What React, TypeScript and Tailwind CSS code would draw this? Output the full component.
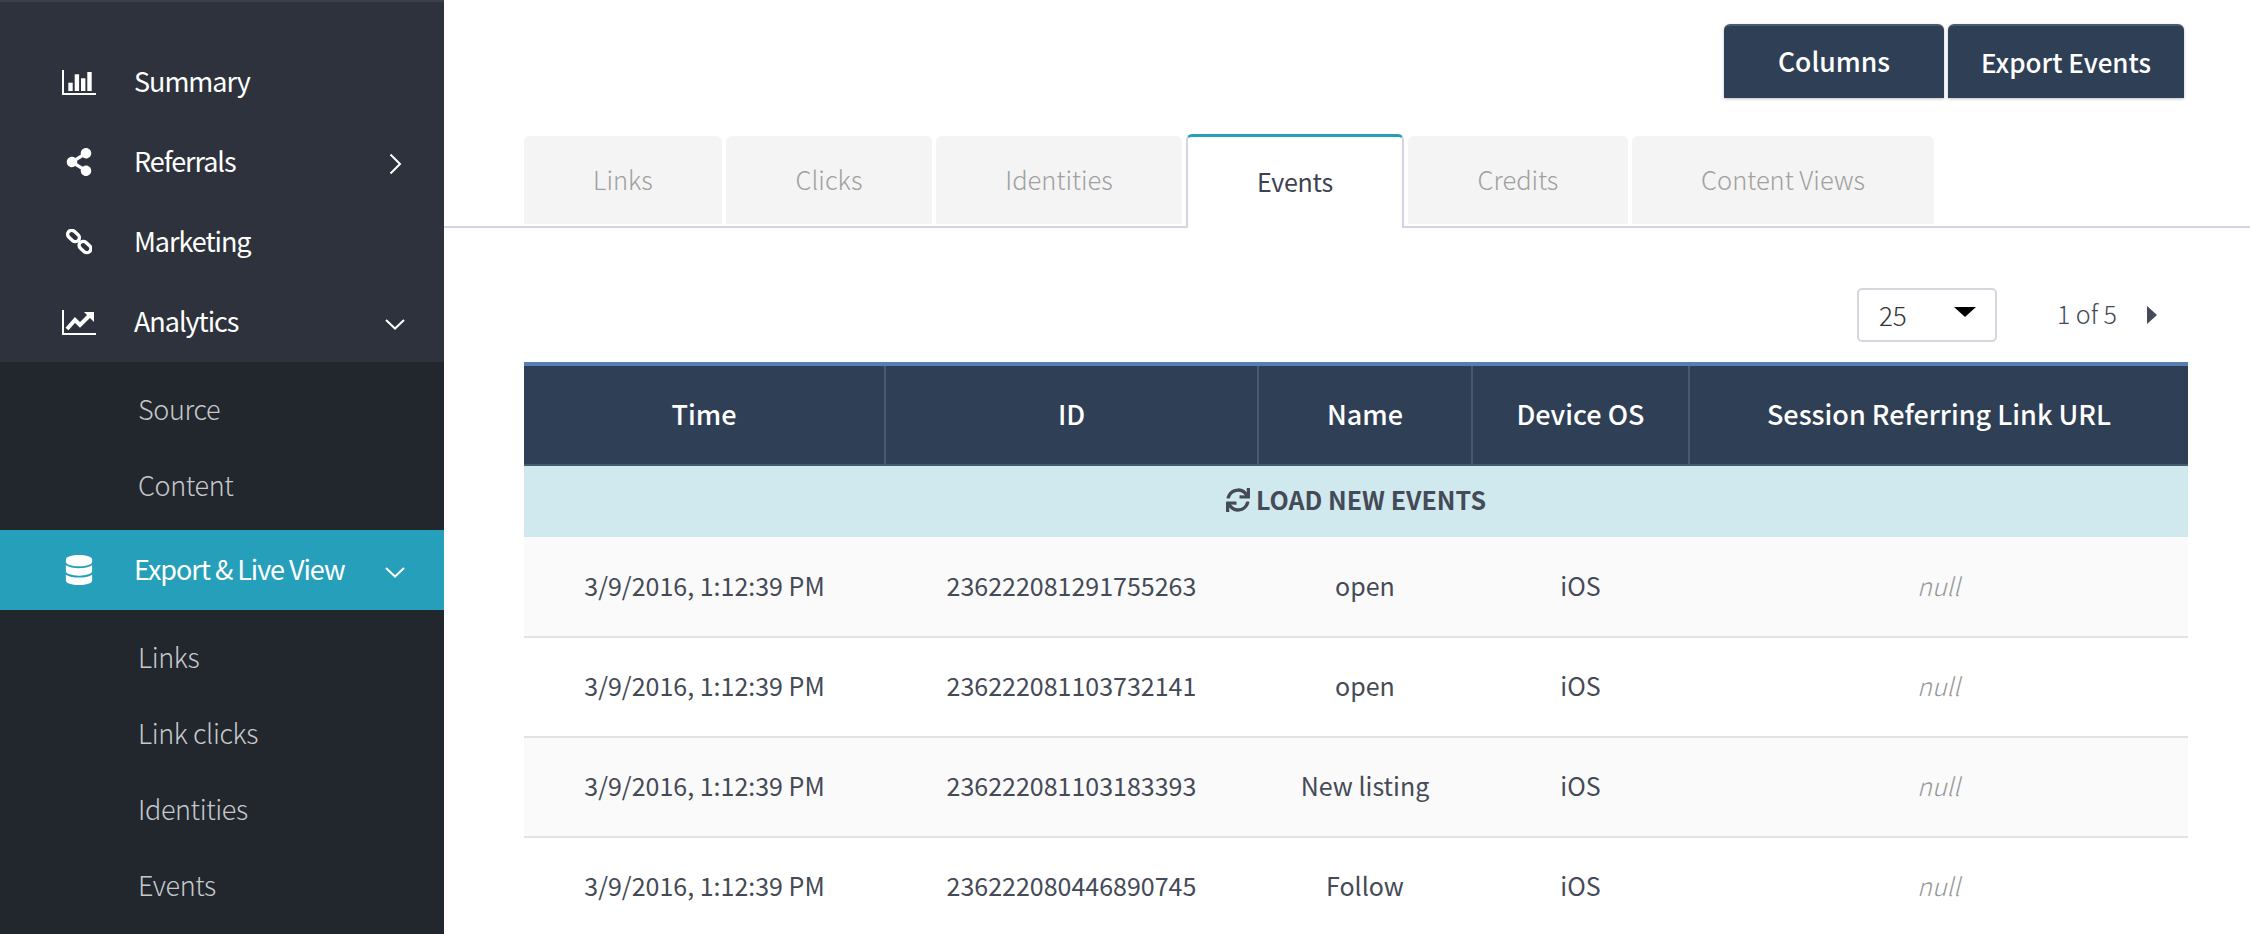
import { ReactNode } from "react";
import { FaShareAlt, FaDatabase, FaSync } from "react-icons/fa";

const BarIcon = () => (
  <svg width="34" height="25" viewBox="0 0 34 25" fill="#fff">
    <rect x="0" y="0" width="2" height="25" />
    <rect x="0" y="23" width="34" height="2" />
    <rect x="6.300" y="12.700" width="4.400" height="8.300" />
    <rect x="12.700" y="4.300" width="4.400" height="16.700" />
    <rect x="19" y="8.300" width="4.400" height="12.700" />
    <rect x="25.300" y="2" width="4.400" height="19" />
  </svg>
);
const LineIcon = () => (
  <svg width="34" height="25" viewBox="0 0 34 25" fill="none">
    <path d="M1 0v24H34" stroke="#fff" strokeWidth="2" />
    <path d="M5 19l8-9 5 5 10-10" stroke="#fff" strokeWidth="4" />
    <path d="M22 2h10v10z" fill="#fff" />
  </svg>
);
const LinkIcon = () => (
  <svg width="26" height="26" viewBox="0 0 26 26" fill="none" stroke="#fff" strokeWidth="3.400">
    <rect x="1" y="3" width="13" height="8" rx="4" transform="rotate(42 7.500 7)" />
    <rect x="12.500" y="14" width="13" height="8" rx="4" transform="rotate(42 19 18)" />
  </svg>
);
const Chevron = ({ dir }: { dir: "right" | "down" }) => (
  <svg width="20" height="20" viewBox="0 0 20 20" fill="none" stroke="#fff" strokeWidth="2">
    {dir === "right" ? <path d="M5.500 0.500L15 10l-9.500 9.500" /> : <path d="M1 6l9 8.500L19 6" />}
  </svg>
);

function NavItem({ icon, label, chevron, active }: { icon: ReactNode; label: string; chevron?: "right" | "down"; active?: boolean }) {
  return (
    <div className={`flex h-[80px] items-center text-[27px] text-white ${active ? "bg-[#269fba]" : ""}`}>
      <div className="mr-[5px] ml-[29px] flex w-[100px] shrink-0 justify-center">{icon}</div>
      <span className="flex-1 -translate-y-[1px] tracking-[-1.050px]">{label}</span>
      {chevron && (
        <div className="mr-[39px] flex w-[20px] justify-center pt-[3px]">
          <Chevron dir={chevron} />
        </div>
      )}
    </div>
  );
}

const SubItem = ({ label }: { label: string }) => (
  <div className="flex h-[76px] items-center pl-[138px] text-[27px] font-light tracking-[-0.4px] text-[#c6c8cb]">
    <span className="-translate-y-[1px]">{label}</span>
  </div>
);

const tabs = [
  { label: "Links", w: "w-[198px]" },
  { label: "Clicks", w: "w-[206px]" },
  { label: "Identities", w: "w-[246px]" },
  { label: "Events", w: "w-[218px]", active: true },
  { label: "Credits", w: "w-[220px]" },
  { label: "Content Views", w: "w-[302px]" },
];

const rows = [
  ["3/9/2016, 1:12:39 PM", "236222081291755263", "open", "iOS"],
  ["3/9/2016, 1:12:39 PM", "236222081103732141", "open", "iOS"],
  ["3/9/2016, 1:12:39 PM", "236222081103183393", "New listing", "iOS"],
  ["3/9/2016, 1:12:39 PM", "236222080446890745", "Follow", "iOS"],
];

export default function App() {
  return (
    <div className="flex h-[934px] w-[2250px] overflow-hidden bg-white font-['Noto_Sans_CJK_SC','Liberation_Sans',sans-serif]">
      <aside className="w-[444px] shrink-0 bg-[#22262d]">
        <div className="h-[362px] border-t-2 border-[#3b404a] bg-[#2d323c] pt-[40px]">
          <NavItem icon={<BarIcon />} label="Summary" />
          <NavItem icon={<FaShareAlt size={28} color="#fff" />} label="Referrals" chevron="right" />
          <NavItem icon={<LinkIcon />} label="Marketing" />
          <NavItem icon={<LineIcon />} label="Analytics" chevron="down" />
        </div>
        <div className="pt-[10px] pb-[6px]">
          <SubItem label="Source" />
          <SubItem label="Content" />
        </div>
        <NavItem icon={<FaDatabase size={30} color="#fff" />} label="Export & Live View" chevron="down" active />
        <div className="pt-[10px]">
          <SubItem label="Links" />
          <SubItem label="Link clicks" />
          <SubItem label="Identities" />
          <SubItem label="Events" />
        </div>
      </aside>

      <main className="min-w-0 flex-1">
        <div className="flex h-[136px] items-start justify-end gap-[4px] pt-[24px] pr-[66px]">
          <button className="h-[74px] w-[220px] rounded-t-[6px] border-t-2 border-[#4a5c72] bg-[#2f4056] pb-[2px] text-[26.500px] font-medium text-white shadow-[0_1px_3px_rgba(0,0,0,0.25)]">
            Columns
          </button>
          <button className="h-[74px] w-[236px] rounded-t-[6px] border-t-2 border-[#4a5c72] bg-[#2f4056] pb-[2px] text-[26px] font-medium text-white shadow-[0_1px_3px_rgba(0,0,0,0.25)]">
            Export Events
          </button>
        </div>

        <div className="flex h-[92px] items-end gap-[4px] border-b-2 border-[#d2d5e3] pl-[80px]">
          {tabs.map((t) =>
            t.active ? (
              <div
                key={t.label}
                className={`${t.w} relative z-10 -mb-[2px] flex h-[94px] items-center justify-center rounded-t-[6px] border-x-2 border-t-[3px] border-x-[#d2d5e3] border-t-[#269fba] bg-white pb-[2px] text-[25px] tracking-[-0.2px] text-[#3c4250]`}
              >
                {t.label}
              </div>
            ) : (
              <div
                key={t.label}
                className={`${t.w} mb-[2px] flex h-[88px] items-center justify-center rounded-t-[6px] bg-[#f4f4f4] pb-[1px] text-[25.500px] font-light text-[#a0a0a0]`}
              >
                {t.label}
              </div>
            ),
          )}
        </div>

        <div className="flex items-center justify-end pt-[60px] pr-[93px]">
          <div className="flex h-[54px] w-[140px] items-center justify-between rounded-[5px] border-2 border-[#d5d6de] pr-[19px] pl-[20px] text-[26px] font-light text-[#333]">
            <span className="-translate-y-[1px]">25</span>
            <span className="mb-[6px] h-0 w-0 border-x-[11px] border-t-[10px] border-x-transparent border-t-black" />
          </div>
          <span className="ml-[60px] -translate-y-[1px] text-[25px] font-light text-[#444a57]">1 of 5</span>
          <span className="ml-[30px] h-0 w-0 border-y-[9px] border-l-[10px] border-y-transparent border-l-[#444a57]" />
        </div>

        <table className="mt-[20px] ml-[80px] w-[1664px] table-fixed border-collapse border-t-4 border-[#5580b5] text-center">
          <thead>
            <tr className="h-[101px] border-b-2 border-[#485a6e] bg-[#2f4056] text-[27px] text-white">
              <th className="w-[361px] pb-[2px] font-medium">Time</th>
              <th className="w-[373px] border-l-2 border-[#485a6e] pb-[2px] font-medium">ID</th>
              <th className="w-[214px] border-l-2 border-[#485a6e] pb-[2px] font-medium">Name</th>
              <th className="w-[217px] border-l-2 border-[#485a6e] pb-[2px] font-medium">Device OS</th>
              <th className="border-l-2 border-[#485a6e] pb-[2px] font-medium">Session Referring Link URL</th>
            </tr>
          </thead>
          <tbody>
            <tr className="h-[72px] bg-[#cfe9ee]">
              <td colSpan={5} className="pb-[2px] text-[25px] font-bold text-[#444a57]">
                <span className="inline-flex items-center gap-[6px]">
                  <FaSync size={24} color="#444a57" />
                  LOAD NEW EVENTS
                </span>
              </td>
            </tr>
            {rows.map((r, i) => (
              <tr key={r[1]} className={`h-[100px] border-b-2 border-[#dfe3e6] text-[25px] text-[#454a57] ${i % 2 === 0 ? "bg-[#fafafa]" : "bg-white"}`}>
                {r.map((c) => (
                  <td key={c} className="pb-[2px]">{c}</td>
                ))}
                <td className="pb-[2px] font-light text-[#999999] italic">null</td>
              </tr>
            ))}
          </tbody>
        </table>
      </main>
    </div>
  );
}
